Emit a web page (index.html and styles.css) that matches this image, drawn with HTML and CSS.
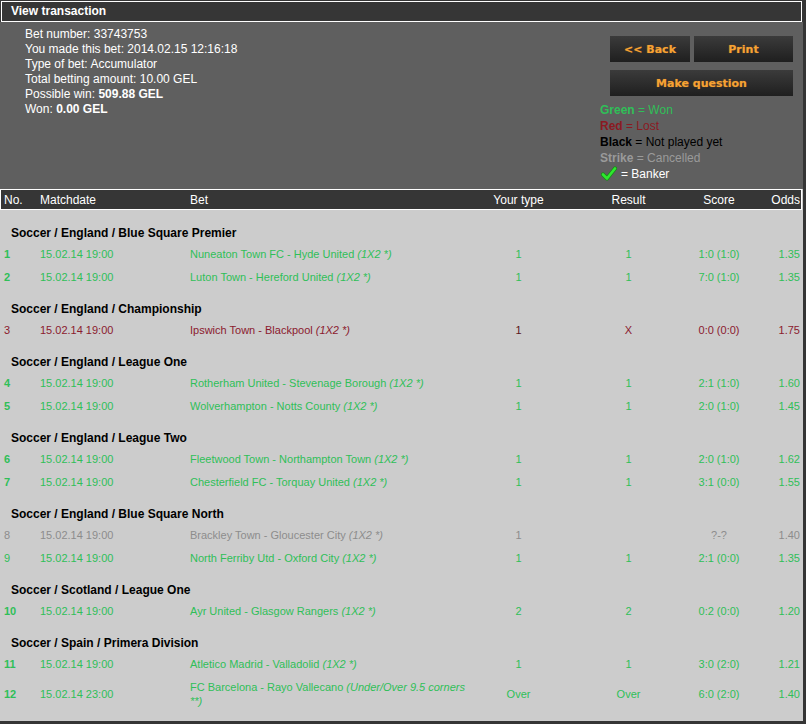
FILE: index.html
```html
<!DOCTYPE html>
<html>
<head>
<meta charset="utf-8">
<title>View transaction</title>
<link rel="stylesheet" href="styles.css">
</head>
<body>
<div class="wrap">
  <div class="titlebar"><div class="title">View transaction</div></div>
  <div class="info">
    <div class="details">
      <div>Bet number: 33743753</div>
      <div>You made this bet: 2014.02.15 12:16:18</div>
      <div>Type of bet: Accumulator</div>
      <div>Total betting amount: 10.00 GEL</div>
      <div>Possible win: <b>509.88 GEL</b></div>
      <div>Won: <b>0.00 GEL</b></div>
    </div>
    <div class="side">
      <div class="buttons">
        <div class="btnrow">
          <button class="btn back">&lt;&lt; Back</button>
          <button class="btn print">Print</button>
        </div>
        <button class="btn wide">Make question</button>
      </div>
      <div class="legend">
        <div class="won"><b>Green</b> = Won</div>
        <div class="lost"><b>Red</b> = Lost</div>
        <div class="black"><b>Black</b> = Not played yet</div>
        <div class="strike"><b>Strike</b> = Cancelled</div>
        <div class="banker"><svg class="check" width="16" height="16" viewBox="0 0 16 16"><path d="M2 8.5 L6 12.5 L14 2.5" fill="none" stroke="#1a8a1a" stroke-width="4.2" stroke-linecap="round" stroke-linejoin="round"/><path d="M2 8.5 L6 12.5 L14 2.5" fill="none" stroke="#2ee82e" stroke-width="2.6" stroke-linecap="round" stroke-linejoin="round"/></svg> = Banker</div>
      </div>
    </div>
  </div>
  <table class="bets">
    <colgroup>
      <col class="c-no"><col class="c-date"><col class="c-bet"><col class="c-type"><col class="c-res"><col class="c-score"><col class="c-odds">
    </colgroup>
    <thead>
      <tr>
        <th class="l first">No.</th><th class="l">Matchdate</th><th class="l">Bet</th><th>Your type</th><th>Result</th><th>Score</th><th class="r last">Odds</th>
      </tr>
    </thead>
    <tbody>
      <tr class="grp firstgrp"><td colspan="7">Soccer / England / Blue Square Premier</td></tr>
      <tr class="won"><td class="no b">1</td><td>15.02.14 19:00</td><td>Nuneaton Town FC - Hyde United <i>(1X2 *)</i></td><td class="c">1</td><td class="c">1</td><td class="c">1:0 (1:0)</td><td class="r">1.35</td></tr>
      <tr class="won"><td class="no b">2</td><td>15.02.14 19:00</td><td>Luton Town - Hereford United <i>(1X2 *)</i></td><td class="c">1</td><td class="c">1</td><td class="c">7:0 (1:0)</td><td class="r">1.35</td></tr>
      <tr class="grp"><td colspan="7">Soccer / England / Championship</td></tr>
      <tr class="lost"><td class="no">3</td><td>15.02.14 19:00</td><td>Ipswich Town - Blackpool <i>(1X2 *)</i></td><td class="c dk">1</td><td class="c">X</td><td class="c">0:0 (0:0)</td><td class="r">1.75</td></tr>
      <tr class="grp"><td colspan="7">Soccer / England / League One</td></tr>
      <tr class="won"><td class="no b">4</td><td>15.02.14 19:00</td><td>Rotherham United - Stevenage Borough <i>(1X2 *)</i></td><td class="c">1</td><td class="c">1</td><td class="c">2:1 (1:0)</td><td class="r">1.60</td></tr>
      <tr class="won"><td class="no b">5</td><td>15.02.14 19:00</td><td>Wolverhampton - Notts County <i>(1X2 *)</i></td><td class="c">1</td><td class="c">1</td><td class="c">2:0 (1:0)</td><td class="r">1.45</td></tr>
      <tr class="grp"><td colspan="7">Soccer / England / League Two</td></tr>
      <tr class="won"><td class="no b">6</td><td>15.02.14 19:00</td><td>Fleetwood Town - Northampton Town <i>(1X2 *)</i></td><td class="c">1</td><td class="c">1</td><td class="c">2:0 (1:0)</td><td class="r">1.62</td></tr>
      <tr class="won"><td class="no b">7</td><td>15.02.14 19:00</td><td>Chesterfield FC - Torquay United <i>(1X2 *)</i></td><td class="c">1</td><td class="c">1</td><td class="c">3:1 (0:0)</td><td class="r">1.55</td></tr>
      <tr class="grp"><td colspan="7">Soccer / England / Blue Square North</td></tr>
      <tr class="cancel"><td class="no">8</td><td>15.02.14 19:00</td><td>Brackley Town - Gloucester City <i>(1X2 *)</i></td><td class="c">1</td><td class="c"></td><td class="c">?-?</td><td class="r">1.40</td></tr>
      <tr class="won"><td class="no">9</td><td>15.02.14 19:00</td><td>North Ferriby Utd - Oxford City <i>(1X2 *)</i></td><td class="c">1</td><td class="c">1</td><td class="c">2:1 (0:0)</td><td class="r">1.35</td></tr>
      <tr class="grp"><td colspan="7">Soccer / Scotland / League One</td></tr>
      <tr class="won"><td class="no b">10</td><td>15.02.14 19:00</td><td>Ayr United - Glasgow Rangers <i>(1X2 *)</i></td><td class="c">2</td><td class="c">2</td><td class="c">0:2 (0:0)</td><td class="r">1.20</td></tr>
      <tr class="grp"><td colspan="7">Soccer / Spain / Primera Division</td></tr>
      <tr class="won"><td class="no b">11</td><td>15.02.14 19:00</td><td>Atletico Madrid - Valladolid <i>(1X2 *)</i></td><td class="c">1</td><td class="c">1</td><td class="c">3:0 (2:0)</td><td class="r">1.21</td></tr>
      <tr class="won"><td class="no b">12</td><td>15.02.14 23:00</td><td>FC Barcelona - Rayo Vallecano <i>(Under/Over 9.5 corners **)</i></td><td class="c">Over</td><td class="c">Over</td><td class="c">6:0 (2:0)</td><td class="r">1.40</td></tr>
    </tbody>
  </table>
</div>
</body>
</html>
```

FILE: styles.css
```css
html, body {
  margin: 0;
  padding: 0;
}
body {
  background: #353535;
  width: 806px;
  height: 724px;
  overflow: hidden;
  font-family: "Liberation Sans", Arial, sans-serif;
  font-size: 12px;
}
.wrap {
  width: 803px;
  height: 721px;
  background: #cccccc;
  overflow: hidden;
}
.titlebar {
  background: #363636;
  padding: 1px 0 0 1px;
  height: 21px;
}
.title {
  height: 19px;
  border: 1px solid #ffffff;
  color: #ffffff;
  font-weight: bold;
  line-height: 19px;
  padding-left: 9px;
  box-sizing: content-box;
  width: 790px;
}
.info {
  background: #5f5f5f;
  height: 167px;
  display: flex;
  justify-content: space-between;
  color: #ffffff;
}
.details {
  padding: 5px 0 0 25px;
  line-height: 15px;
}
.side {
  width: 203px;
  padding-top: 14px;
}
.buttons {
  margin-left: 10px;
  width: 183px;
  display: flex;
  flex-direction: column;
  gap: 8px;
}
.btnrow {
  display: flex;
  gap: 4px;
}
.btn {
  border: none;
  height: 26px;
  padding: 0;
  margin: 0;
  background: linear-gradient(#3b3b3b, #1f1f1f);
  color: #f6a233;
  font-family: "DejaVu Sans", Verdana, sans-serif;
  font-weight: bold;
  font-size: 11px;
  text-align: center;
  text-shadow: 0 0 1px rgba(255, 160, 40, 0.5);
}
.back { width: 80px; }
.print { width: 99px; }
.wide { width: 183px; }
.legend {
  margin-top: 6px;
  line-height: 16px;
}
.legend .won { color: #2fbf58; }
.legend .lost { color: #8b1a22; }
.legend .black { color: #000000; }
.legend .strike { color: #9a9a9a; }
.legend .banker {
  color: #ffffff;
  display: flex;
  align-items: center;
  gap: 4px;
  margin-left: 1px;
}
.check { display: block; margin-top: -1px; }

.bets {
  width: 802px;
  table-layout: fixed;
  border-collapse: separate;
  border-spacing: 0;
  font-size: 11px;
}
.c-no { width: 36px; }
.c-date { width: 150px; }
.c-bet { width: 284px; }
.c-type { width: 97px; }
.c-res { width: 123px; }
.c-score { width: 58px; }
.c-odds { width: 54px; }

.bets th {
  background: #363636;
  color: #ffffff;
  font-weight: normal;
  font-size: 12px;
  height: 19px;
  padding: 0 4px;
  border-top: 1px solid #ffffff;
  border-bottom: 1px solid #ffffff;
  text-align: center;
  line-height: 14px;
}
.bets th.l { text-align: left; }
.bets th.r { text-align: right; padding-right: 2px; }
.bets th.first { border-left: 1px solid #ffffff; padding-left: 3px; }
.bets th.last { border-right: 1px solid #ffffff; padding-right: 1px; }

.bets td {
  padding: 5px 4px 4px;
  line-height: 14px;
  vertical-align: middle;
}
.bets td.c { text-align: center; }
.bets td.r { text-align: right; padding-right: 2px; }
.bets td.b { font-weight: bold; }

.bets tr.grp td {
  padding: 14px 4px 2px 11px;
  font-size: 12px;
  font-weight: bold;
  color: #000000;
}
.bets tr.firstgrp td { padding-top: 16px; padding-bottom: 2px; }

.bets tr.won td { color: #2fbf58; }
.bets tr.lost td { color: #8b1a2e; }
.bets tr.lost td.dk { color: #5a1420; }
.bets tr.cancel td { color: #8c8c8c; }
```
